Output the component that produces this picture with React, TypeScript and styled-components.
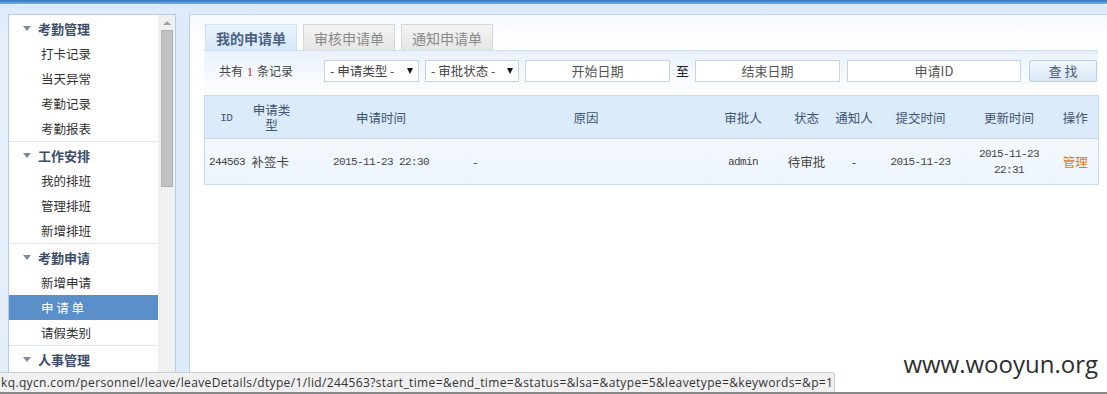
import { FC } from 'react'
import styled, { createGlobalStyle } from 'styled-components'

const GlobalStyle = createGlobalStyle`
  html, body {
    margin: 0;
    padding: 0;
    background: #e3eefa;
  }
  body {
    font-family: "Noto Sans CJK SC", "Liberation Sans", sans-serif;
  }
`

const CJK = `"Noto Sans CJK SC", "Liberation Sans", sans-serif`
const MONO = `"Liberation Mono", "Noto Sans CJK SC", monospace`

const Page = styled.div`
  position: relative;
  width: 1107px;
  height: 394px;
  overflow: hidden;
  display: flex;
  flex-direction: column;
  background: linear-gradient(#dbe9f8, #e6f0fb 40px, #e3eefa);
`

const TopBand = styled.div`
  height: 4px;
  flex: none;
  background: linear-gradient(#2f72b6, #7cb0e0);
`

const Body = styled.div`
  flex: 1;
  display: flex;
  padding: 10px 0 0 8px;
  min-height: 0;
`

const Sidebar = styled.aside`
  width: 166px;
  flex: none;
  display: flex;
  background: #fff;
  border: 1px solid #b4cde6;
  border-bottom: none;
`

const NavList = styled.div`
  width: 149px;
  flex: none;
`

const Group = styled.div`
  border-bottom: 1px solid #dde5ee;
`

const GroupTitle = styled.div`
  height: 26px;
  display: flex;
  align-items: center;
  padding-left: 14px;
  font-size: 13px;
  font-weight: bold;
  color: #3c4d6b;
  gap: 7px;
`

const Caret = styled.span`
  width: 0;
  height: 0;
  border-left: 4px solid transparent;
  border-right: 4px solid transparent;
  border-top: 5px solid #7b8aa0;
`

const NavItem = styled.div<{ $active?: boolean }>`
  height: 25px;
  display: flex;
  align-items: center;
  padding-left: 32px;
  font-size: 12.5px;
  color: ${p => (p.$active ? '#fff' : '#333')};
  background: ${p => (p.$active ? '#5b8fca' : 'transparent')};
  white-space: pre;
`

const Scrollbar = styled.div`
  width: 17px;
  flex: none;
  background: #f0f0f0;
  display: flex;
  flex-direction: column;
  align-items: center;
`

const ScrollArrow = styled.div`
  margin-top: 6px;
  width: 0;
  height: 0;
  border-left: 4px solid transparent;
  border-right: 4px solid transparent;
  border-bottom: 4px solid #a0a0a0;
`

const ScrollThumb = styled.div`
  margin-top: 5px;
  width: 12px;
  height: 157px;
  background: #c1c1c1;
  border: 1px solid #b0b0b0;
  box-sizing: border-box;
`

const Splitter = styled.div`
  width: 13px;
  flex: none;
  background: #dcebfa;
  border-right: 1px solid #b8d0ea;
`

const Main = styled.main`
  flex: 1;
  background: linear-gradient(#f4f8fd, #ffffff 30px);
  border-top: 1px solid #c4d8ec;
  padding: 9px 9px 0 14px;
  min-width: 0;
`

const Tabs = styled.div`
  display: flex;
  gap: 6px;
  padding-left: 1px;
`

const Tab = styled.div<{ $active?: boolean }>`
  height: 26px;
  width: 92px;
  box-sizing: border-box;
  display: flex;
  align-items: center;
  justify-content: center;
  font-size: 14px;
  font-weight: ${p => (p.$active ? 'bold' : 'normal')};
  color: ${p => (p.$active ? '#4b6283' : '#8a8a8a')};
  background: ${p =>
    p.$active
      ? 'linear-gradient(#e9f3fc, #d7e8f8)'
      : 'linear-gradient(#f2f2f2, #e6e6e6)'};
  border: 1px solid ${p => (p.$active ? '#cfe0f0' : '#d6d6d6')};
  border-bottom: none;
`

const FilterBar = styled.div`
  height: 45px;
  box-sizing: border-box;
  border-top: 1px solid #cde0f0;
  background: linear-gradient(#e8f1fb, #f7fafd 60%, #fdfdfb);
  display: flex;
  align-items: center;
  padding: 0 0 5px 15px;
  font-size: 12px;
  color: #444;
`

const Count = styled.span`
  width: 105px;
  flex: none;
  b {
    font-weight: normal;
    color: #c0262d;
    margin: 0 4px;
    font-family: "Liberation Serif", serif;
  }
`

const SelectBox = styled.div<{ $w: number }>`
  width: ${p => p.$w}px;
  height: 22px;
  box-sizing: border-box;
  background: #fff;
  border: 1px solid #c8d3dc;
  display: flex;
  align-items: center;
  justify-content: space-between;
  padding: 0 5px;
  margin-right: 6px;
  font-size: 12.5px;
  color: #444;
  flex: none;
`

const Arrow = styled.span`
  width: 0;
  height: 0;
  border-left: 3.5px solid transparent;
  border-right: 3.5px solid transparent;
  border-top: 6px solid #111;
`

const TextBox = styled.div<{ $w: number; $gap?: number }>`
  width: ${p => p.$w}px;
  height: 22px;
  box-sizing: border-box;
  margin-left: ${p => p.$gap || 0}px;
  background: #fff;
  border: 1px solid #c8d3dc;
  display: flex;
  align-items: center;
  justify-content: center;
  font-size: 13px;
  color: #555;
  flex: none;
`

const To = styled.span`
  width: 25px;
  text-align: center;
  font-size: 13px;
  color: #222;
  flex: none;
`

const SearchButton = styled.div`
  margin-left: 8px;
  width: 68px;
  height: 22px;
  box-sizing: border-box;
  border: 1px solid #bccfe3;
  border-radius: 2px;
  background: linear-gradient(#f1f6fc, #d8e6f5);
  display: flex;
  align-items: center;
  justify-content: center;
  font-size: 13px;
  color: #4d5d72;
  white-space: pre;
  flex: none;
`

const Table = styled.table`
  width: 894px;
  border-collapse: collapse;
  table-layout: fixed;
  border: 1px solid #c9dcee;
  font-family: ${CJK};
`

const HeadCell = styled.th<{ $w: number }>`
  box-sizing: border-box;
  width: ${p => p.$w}px;
  height: 43px;
  padding: 0 2px;
  background: #dcebfa;
  font-weight: normal;
  font-size: 12.5px;
  color: #3f5670;
  text-align: center;
  line-height: 15px;
  border-bottom: 1px solid #c9dcee;
`

const Cell = styled.td<{ $mono?: boolean; $align?: string; $color?: string }>`
  box-sizing: border-box;
  height: 46px;
  padding: 0 ${p => (p.$align === 'left' ? '4px' : '2px')};
  background: linear-gradient(#f4f8fd, #edf4fc);
  text-align: ${p => p.$align || 'center'};
  font-family: ${p => (p.$mono ? MONO : CJK)};
  font-size: ${p => (p.$mono ? '11px' : '12.5px')};
  letter-spacing: ${p => (p.$mono ? '-0.6px' : '0')};
  line-height: 16px;
  color: ${p => p.$color || '#444'};
`

const IdLabel = styled.span`
  font-family: ${MONO};
  font-size: 11px;
  letter-spacing: -0.6px;
`

const StatusBar = styled.div`
  position: absolute;
  left: 0;
  bottom: 2px;
  width: 835px;
  height: 20px;
  box-sizing: border-box;
  background: #f0f0f0;
  border-top: 1px solid #cfcfcf;
  border-right: 1px solid #cfcfcf;
  border-top-right-radius: 3px;
  display: flex;
  align-items: center;
  padding-left: 1px;
  font-family: "Open Sans", "Noto Sans", sans-serif;
  font-size: 12px;
  letter-spacing: 0.37px;
  color: #333;
  white-space: nowrap;
  overflow: hidden;
`

const BottomEdge = styled.div`
  position: absolute;
  left: 0;
  right: 0;
  bottom: 0;
  height: 2px;
  background: #8a8a8a;
`

const Watermark = styled.div`
  position: absolute;
  right: 9px;
  bottom: 14px;
  font-family: "Open Sans", "Noto Sans", sans-serif;
  font-size: 24px;
  color: #2e2e2e;
`

const groups = [
  { title: '考勤管理', items: ['打卡记录', '当天异常', '考勤记录', '考勤报表'] },
  { title: '工作安排', items: ['我的排班', '管理排班', '新增排班'] },
  { title: '考勤申请', items: ['新增申请', '申 请 单', '请假类别'] },
  { title: '人事管理', items: [] as string[] },
]

const columns = [
  { label: 'ID', w: 43, mono: true },
  { label: '申请类型', w: 48 },
  { label: '申请时间', w: 171 },
  { label: '原因', w: 239 },
  { label: '审批人', w: 75 },
  { label: '状态', w: 52 },
  { label: '通知人', w: 43 },
  { label: '提交时间', w: 90 },
  { label: '更新时间', w: 87 },
  { label: '操作', w: 46 },
]

const App: FC = () => {
  return (
    <Page>
      <GlobalStyle />
      <TopBand />
      <Body>
        <Sidebar>
          <NavList>
            {groups.map(group => (
              <Group key={group.title}>
                <GroupTitle>
                  <Caret />
                  {group.title}
                </GroupTitle>
                {group.items.map(item => (
                  <NavItem key={item} $active={item === '申 请 单'}>
                    {item}
                  </NavItem>
                ))}
              </Group>
            ))}
          </NavList>
          <Scrollbar>
            <ScrollArrow />
            <ScrollThumb />
          </Scrollbar>
        </Sidebar>
        <Splitter />
        <Main>
          <Tabs>
            <Tab $active>我的申请单</Tab>
            <Tab>审核申请单</Tab>
            <Tab>通知申请单</Tab>
          </Tabs>
          <FilterBar>
            <Count>
              共有<b>1</b>条记录
            </Count>
            <SelectBox $w={95}>
              - 申请类型 -<Arrow />
            </SelectBox>
            <SelectBox $w={94}>
              - 审批状态 -<Arrow />
            </SelectBox>
            <TextBox $w={145}>开始日期</TextBox>
            <To>至</To>
            <TextBox $w={145}>结束日期</TextBox>
            <TextBox $w={174} $gap={7}>
              申请ID
            </TextBox>
            <SearchButton>查 找</SearchButton>
          </FilterBar>
          <Table>
            <thead>
              <tr>
                {columns.map(col => (
                  <HeadCell key={col.label} $w={col.w}>
                    {col.mono ? <IdLabel>{col.label}</IdLabel> : col.label}
                  </HeadCell>
                ))}
              </tr>
            </thead>
            <tbody>
              <tr>
                <Cell $mono $align="left">244563</Cell>
                <Cell $align="left">补签卡</Cell>
                <Cell $mono>2015-11-23 22:30</Cell>
                <Cell $align="left">&nbsp;-</Cell>
                <Cell $mono>admin</Cell>
                <Cell>待审批</Cell>
                <Cell>-</Cell>
                <Cell $mono>2015-11-23</Cell>
                <Cell $mono>
                  2015-11-23
                  <br />
                  22:31
                </Cell>
                <Cell $color="#e07a1f">管理</Cell>
              </tr>
            </tbody>
          </Table>
        </Main>
      </Body>
      <Watermark>www.wooyun.org</Watermark>
      <StatusBar>
        kq.qycn.com/personnel/leave/leaveDetails/dtype/1/lid/244563?start_time=&amp;end_time=&amp;status=&amp;lsa=&amp;atype=5&amp;leavetype=&amp;keywords=&amp;p=1
      </StatusBar>
      <BottomEdge />
    </Page>
  )
}

export default App
